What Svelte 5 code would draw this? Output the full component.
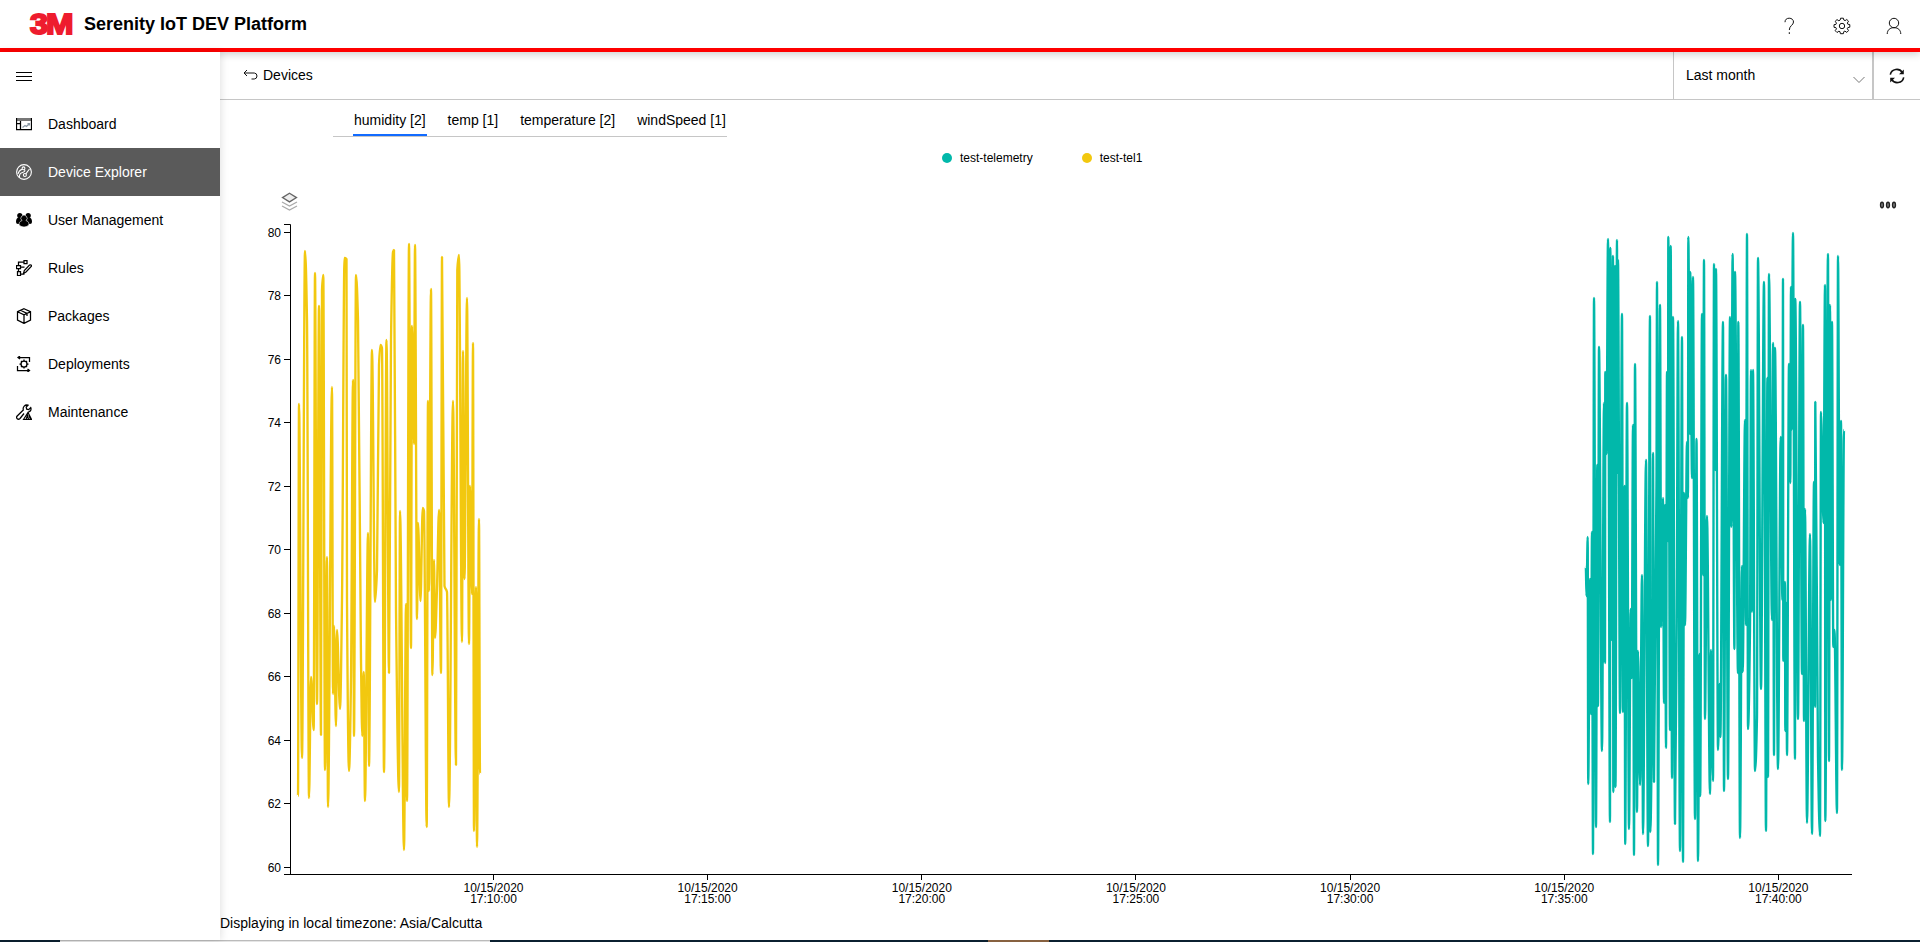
<script>
  const nav = [
    { id: 'dash', label: 'Dashboard' },
    { id: 'device', label: 'Device Explorer', active: true },
    { id: 'users', label: 'User Management' },
    { id: 'rules', label: 'Rules' },
    { id: 'packages', label: 'Packages' },
    { id: 'deploy', label: 'Deployments' },
    { id: 'maint', label: 'Maintenance' }
  ];
  const tabs = ['humidity [2]', 'temp [1]', 'temperature [2]', 'windSpeed [1]'];
  const yTicks = Array.from({ length: 11 }, (_, i) => ({ v: 80 - i * 2, y: 232 + i * 63.5 }));
  const xTicks = ['10', '15', '20', '25', '30', '35', '40'].map((m, i) => ({ t: `17:${m}:00`, x: 493.5 + i * 214.15 }));

  const yellow = '298,796 299,404 302,758 305,251 307,320 309,798 311,677 313.7,730 315,273 317,704 319,306 321,735 322,290 323.3,275 325,770 327,557 328,807 332,387 333,694 334,626 336,726 337,630 340,709 342,600 344.5,258 346.5,259 347,600 349,771 351,680 353,380 354,736 356,275 358,320 361,660 362.3,736 363.7,672 365,801 368,533 369,766 372,350 375,602 377,570 379,365 380.5,345 382,348 384,772 386.5,340 389,673 391,340 393,252 394,250 396,610 399,792 400,511 404,850 406,604 407,801 409,244 411,648 412,326 414,444 415,245 417,619 418,523 420.5,601 422.7,508 424,511 426.7,827 428,401 429,591 431,289 432.4,675 434,560 435,638 437,588 439,510 441,673 442,257 444.5,586 447,592 449,807 453,401 456,765 457.3,270 459,255 462,642 463,351 464.5,579 467,298 469,644 470,486 472,594 473,343 474,831 476,587 477,847 479,519 480,774';
  const teal = '1585.8,567 1586.5,596 1587.7,537 1588.2,784 1590,579 1591,714 1592,532 1593,854 1594,298 1596,827 1597.3,465 1598,706 1599,347 1602,751 1604,403 1605,663 1605,372 1606.5,454 1608,239 1610,822 1609.7,248 1612,640 1613,256 1613.3,792 1615,266 1615.5,787 1617,240 1617.3,473 1618,260 1620,713 1622,314 1623,712 1624.5,486 1625.2,844 1627,403 1629,829 1630.7,609 1631.7,678 1633,425 1634,855 1635,364 1637,812 1638,651 1640,785 1642,575 1643,834 1646,460 1648,846 1650,316 1650,832 1652.3,670 1653,453 1654,782 1656.5,480 1657,282 1658,865 1660,305 1661.2,627 1663,498 1664,703 1665,505 1666,748 1667,372 1668,541 1668,237 1670,730 1670.7,246 1672,778 1673,317 1675,824 1676.7,620 1678,321 1680,851 1682,337 1683,862 1684,493 1685,625 1687,442 1688,498 1688.2,237 1690,434 1690,272 1692,478 1693,277 1695,819 1696.5,439 1698,861 1699.5,654 1700.2,796 1702,314 1703,575 1704,260 1705,719 1707,516 1710,794 1711,650 1713,781 1714,264 1715.4,470 1716,269 1718,750 1719.5,684 1720.4,737 1723,322 1724,791 1726,375 1728,779 1730,317 1731.3,527 1732.6,254 1734.4,649 1735,272 1738,673 1738,322 1740,838 1742,566 1742.7,672 1745,420 1746,625 1747,234 1748,729 1750,628 1751,370 1752,612 1753,370 1755,771 1757,717 1758,258 1761,689 1764,282 1766,831 1767.4,378 1768,777 1769,274 1772,620 1773,343 1774,755 1775,348 1778,769 1780.7,437 1782.4,600 1783,279 1783.2,661 1785,582 1785,731 1786.3,603 1787,755 1789,364 1790.3,483 1791,287 1791.5,430 1793,233 1795,759 1795,299 1798,719 1800,302 1802,674 1803,325 1804,721 1805,509 1807,823 1810,534 1812,834 1814,482 1815,707 1815,402 1818,757 1820,836 1821,412 1823.5,523 1825,285 1825.2,821 1828,254 1829,761 1830,305 1831,600 1832,322 1833.3,647 1834.5,630 1837,813 1838,256 1839.7,565 1841,421 1842,770 1844,430';

  // Monotone cubic interpolation: flat tangents at every local extreme.
  function curve(src) {
    const p = src.split(' ').map((s) => s.split(',').map(Number));
    for (let i = 1; i < p.length; i++) if (p[i][0] < p[i - 1][0] + 0.3) p[i][0] = p[i - 1][0] + 0.3;
    const slope = p.slice(1).map((q, i) => (q[1] - p[i][1]) / (q[0] - p[i][0]));
    const tan = p.map((_, i) => {
      const a = slope[i - 1], b = slope[i];
      if (a === undefined || b === undefined || a * b <= 0) return 0;
      return (2 * a * b) / (a + b);
    });
    let d = `M${p[0]}`;
    for (let i = 1; i < p.length; i++) {
      const h = (p[i][0] - p[i - 1][0]) / 3;
      d += `C${p[i - 1][0] + h},${p[i - 1][1] + h * tan[i - 1]},${p[i][0] - h},${p[i][1] - h * tan[i]},${p[i]}`;
    }
    return d;
  }
</script>

<div class="app">
  <header>
    <svg class="logo" width="48" height="36" viewBox="0 0 48 36">
      <text x="2" y="28.300" font-size="29.500" font-weight="700" textLength="18" lengthAdjust="spacingAndGlyphs">3</text>
      <text x="18" y="28.300" font-size="30" font-weight="700" textLength="27.500" lengthAdjust="spacingAndGlyphs">M</text>
    </svg>
    <h1>Serenity IoT DEV Platform</h1>
    <div class="tools">
      <svg width="16" height="18" viewBox="0 0 16 18"><path d="M4 5.2C4 2.6 5.7 1.2 8.2 1.2S12.5 2.8 12.5 5C12.5 8.2 8.3 8.6 8.3 13M8.3 15.2V17" /></svg>
      <svg width="18" height="18" viewBox="0 0 18 18"><path d="M7.600 1.200h2.800l.4 1.800 1.300.6 1.700-1.100 1.700 1.700-1.200 1.900.5 1.100 2 .4v2.600l-2 .4-.5 1.100 1.200 1.900-1.700 1.800-1.900-1.300-1.100.5-.4 2.100H7.400L7 14.700l-1.100-.5L4 15.500l-1.800-1.800 1.300-1.900-.5-1.100-2-.4V7.700l2-.4.5-1.100L2.200 4.300 4 2.600l1.900 1.200L7.200 3z" /><circle cx="9" cy="9" r="2.700" /></svg>
      <svg width="18" height="18" viewBox="0 0 18 18"><circle cx="9" cy="6" r="4.700" /><path d="M2.200 17C2.400 12.800 5 10.700 9 10.700S15.600 12.800 15.800 17" /></svg>
    </div>
  </header>

  <div class="body">
    <nav>
      <div class="item"><svg class="menu" width="16" height="16" viewBox="0 0 16 16"><path d="M0 4.500H16M0 8.500H16M0 12.500H16" /></svg></div>
      {#each nav as n}
        <div class="item" class:active={n.active}>
          <svg class="ico" width="16" height="16" viewBox="0 0 16 16">
            {#if n.id === 'dash'}
              <path d="M6.500 11.500l2.500-2 1.500 1L13.500 7.500M11.500 7.500h2v2" stroke="#8b99a5" /><path d="M0 3.500H16" stroke="#777" stroke-width="3" /><path d="M.5 2V13.500H15.500V2M4.500 5V13.500M.5 7.500H4" />
            {:else if n.id === 'device'}
              <circle cx="8" cy="8" r="7.400" /><path d="M3.500 13.500C3 10.500 4.500 9 6.500 8.500 8.500 8 9.500 6.800 8.500 5.500M9.800 9.800L13.500 5M2 10C2.500 7.500 4 6 6 5.200" /><circle cx="7.500" cy="4.300" r="1.400" /><circle cx="8.900" cy="11" r="1.500" />
            {:else if n.id === 'users'}
              <g fill="#000" stroke="none"><circle cx="3.800" cy="3.500" r="2.600" /><circle cx="12.200" cy="3.500" r="2.600" /><path d="M0 10C0 7 1 5.500 3 5.500h3.500V12H2Q0 12 0 10zM16 10C16 7 15 5.500 13 5.500H9.500V12H14Q16 12 16 10z" /></g>
              <path d="M3 12.300C3 10 4.500 9 6 8.600a3.100 3.100 0 1 1 4 0c1.500.4 3 1.400 3 3.700Q12 15 8 15T3 12.300z" fill="#000" stroke="#fff" stroke-width=".6" />
            {:else if n.id === 'rules'}
              <path d="M8 .5h3v3H8zM.5 5.500h4v3h-4zM1.500 11.500h3v4h-3zM8 2H2.500V5.500M4.500 7h4M2.500 8.500v3M4.500 14H8.500M7.500 13.500l.8-3L13.500 5q2-.7 2 1.200L10 12z" />
            {:else if n.id === 'packages'}
              <path d="M8 .7L14.500 3.700V12L8 15.400 1.500 12V3.700zM1.500 3.700L8 6.900l6.500-3.200M8 6.900v8.500M4.500 2.300L11 5.500V8" />
            {:else if n.id === 'deploy'}
              <path d="M13.500 6V1.500H2.500M4 0L2 1.500 4 3M1.500 10v4.500H13M11.500 13l2 1.500-2 1.500" /><circle cx="8" cy="8" r="3" /><path d="M8 3.500v1.700M8 10.800v1.700M3.500 8h1.700M10.800 8h1.700M5 5l1 1M10 10l1 1M11 5l-1 1M5 11l1-1" />
            {:else}
              <path d="M8 9.500L4 14.500c-2 1.900-4.500-.5-2.800-2.500L7.300 6C6.500 3 9 .3 12 1.200L10.200 3.200l.5 2 2 .4 2-2C15.600 5.700 14.500 7.500 12.500 8M7.500 15.500L12 8.500l3.500 7zM10 15.500l1.500-4 1 4M13 11l1.500 4.500" />
            {/if}
          </svg>
          <span>{n.label}</span>
        </div>
      {/each}
    </nav>

    <main>
      <div class="bar">
        <div class="crumb">
          <svg width="15" height="12" viewBox="0 0 15 12"><path d="M4 1L1 4l3 3M1 4H11.300Q14 4.300 14 7T11.300 10H8.500" /></svg>
          <span>Devices</span>
        </div>
        <div class="range"><span>Last month</span><svg width="12" height="8" viewBox="0 0 12 8"><path d="M.5 1L6 6.500 11.500 1" /></svg></div>
        <div class="refresh"><svg width="16" height="16" viewBox="0 0 16 16"><path d="M1.300 6.700C2.500 .5 10.500-.2 13.300 4.500M14.700 9.300C13.500 15.500 5.500 16.200 2.700 11.500" /><path d="M14.800 1.500V6.300H10zM1.200 14.500V9.700H6z" fill="#111" stroke="none" /></svg></div>
      </div>
      <div class="tabs">
        {#each tabs as t, i}<div class="tab" class:on={i === 0}>{t}</div>{/each}
      </div>
      <div class="legend">
        <div><i class="teal"></i>test-telemetry</div>
        <div><i class="gold"></i>test-tel1</div>
      </div>
      <svg class="chart" width="1700" height="732" viewBox="220 180 1700 732">
        <g fill="none" stroke-width="1.300">
          <path d="M282 206l7.500 4 7.500-4M282 202l7.500 4 7.500-4" stroke="#aaa" />
          <path d="M289.500 193.300L296.500 197.600 289.500 201.900 282.500 197.600z" fill="#eee" stroke="#666" />
        </g>
        <g fill="#999" stroke="#222" stroke-width="1.500"><ellipse cx="1882" cy="205" rx="1.400" ry="2.700" /><ellipse cx="1888" cy="205" rx="1.400" ry="2.700" /><ellipse cx="1894" cy="205" rx="1.400" ry="2.700" /></g>
        <path class="series" d={curve(yellow)} stroke="#f2c80f" />
        <path class="series" d={curve(teal)} stroke="#01b8aa" />
        <path class="axis" d="M284 224.500H290.500V874.500M284 874.500H1852" />
        {#each yTicks as t}
          <path class="axis" d="M284 {Math.floor(t.y) + 0.5}H290" />
          <text x="281" y={Math.floor(t.y) + 5} text-anchor="end">{t.v}</text>
        {/each}
        {#each xTicks as t}
          <path class="axis" d="M{Math.floor(t.x) + 0.5} 874V880" />
          <text x={t.x} y="892" text-anchor="middle">10/15/2020</text>
          <text x={t.x} y="903" text-anchor="middle">{t.t}</text>
        {/each}
      </svg>
      <p class="zone">Displaying in local timezone: Asia/Calcutta</p>
    </main>
  </div>
  <footer><i class="pane"></i><i class="mark"></i></footer>
</div>

<style>
  :global(body) { margin: 0; background: #fff; overflow: hidden; }
  .app { width: 1920px; height: 942px; display: flex; flex-direction: column; font: 14px/20px "Liberation Sans", Arial, sans-serif; color: #000; }
  svg { display: block; flex: none; fill: none; stroke: #111; stroke-width: 1; }
  header { height: 48px; flex: none; border-bottom: 4px solid #f00; display: flex; align-items: center; padding-left: 29px; box-shadow: 0 2px 8px rgba(0,0,0,.2); z-index: 1; position: relative; }
  .logo { margin-left: -1px; margin-right: 1px; }
  .logo text { fill: #ee1c2e; stroke: #ee1c2e; stroke-width: 2; }
  h1 { font-size: 18px; line-height: 24px; margin: 0 0 0 7px; font-weight: 700; }
  .tools { margin-left: auto; display: flex; gap: 35px; padding: 4px 17px 0 0; }
  .tools svg:nth-child(2) { margin: 0 -1px 0 1px; }
  .body { flex: 1; display: flex; min-height: 0; }
  nav { width: 220px; flex: none; box-shadow: 1px 0 8px rgba(0,0,0,.12); z-index: 2; position: relative; background: #fff; }
  .item { height: 48px; display: flex; align-items: center; padding-left: 16px; gap: 16px; }
  .item.active { background: #5a5a5a; color: #fff; }
  .ico { stroke: #000; stroke-width: 1.250; }
  .item.active svg { stroke: #fff; stroke-width: 1.100; }
  .menu { stroke: #000; }
  main { flex: 1; display: flex; flex-direction: column; min-width: 0; }
  .bar { height: 47px; border-bottom: 1px solid #c6c6c6; display: flex; flex: none; }
  .crumb { flex: 1; display: flex; align-items: center; gap: 5px; padding-left: 23px; }
  .crumb svg, .crumb span { margin-bottom: 1px; }
  .range { box-sizing: border-box; width: 201px; border-left: 1px solid #c6c6c6; border-right: 2px solid #c6c6c6; display: flex; justify-content: space-between; align-items: center; padding: 0 7px 0 12px; }
  .range svg { stroke: #777; margin-top: 9px; }
  .range span { margin-bottom: 1px; }
  .refresh { width: 46px; display: flex; align-items: center; justify-content: center; }
  .refresh svg { stroke-width: 1.600; }
  .tabs { display: flex; flex: none; align-self: flex-start; height: 36px; margin-left: 113px; padding-left: 20px; border-bottom: 1px solid #c6c6c6; gap: 20px; }
  .tab { height: 36px; line-height: 41px; padding: 0 1px; box-sizing: border-box; }
  .tab.on { border-bottom: 2px solid #126bff; }
  .legend { height: 41px; margin-bottom: 2px; flex: none; display: flex; gap: 49px; padding-left: 722px; font-size: 12px; align-items: center; }
  .legend div { display: flex; align-items: center; gap: 8px; }
  .legend i { width: 10px; height: 10px; border-radius: 50%; }
  .teal { background: #01b8aa; }
  .gold { background: #f2c80f; }
  .chart text { font-size: 12px; fill: #000; stroke: none; }
  .chart .series { stroke-width: 2.350; stroke-linejoin: bevel; }
  .axis { stroke: #000; }
  .zone { margin: 1px 0 0; }
  footer { height: 2px; background: #0b2030; display: flex; flex: none; }
  .pane { width: 430px; margin-left: 60px; background: linear-gradient(#bbb 50%, #e5e5e5 50%); }
  .mark { width: 61px; margin-left: 498px; background: #876140; }
</style>
